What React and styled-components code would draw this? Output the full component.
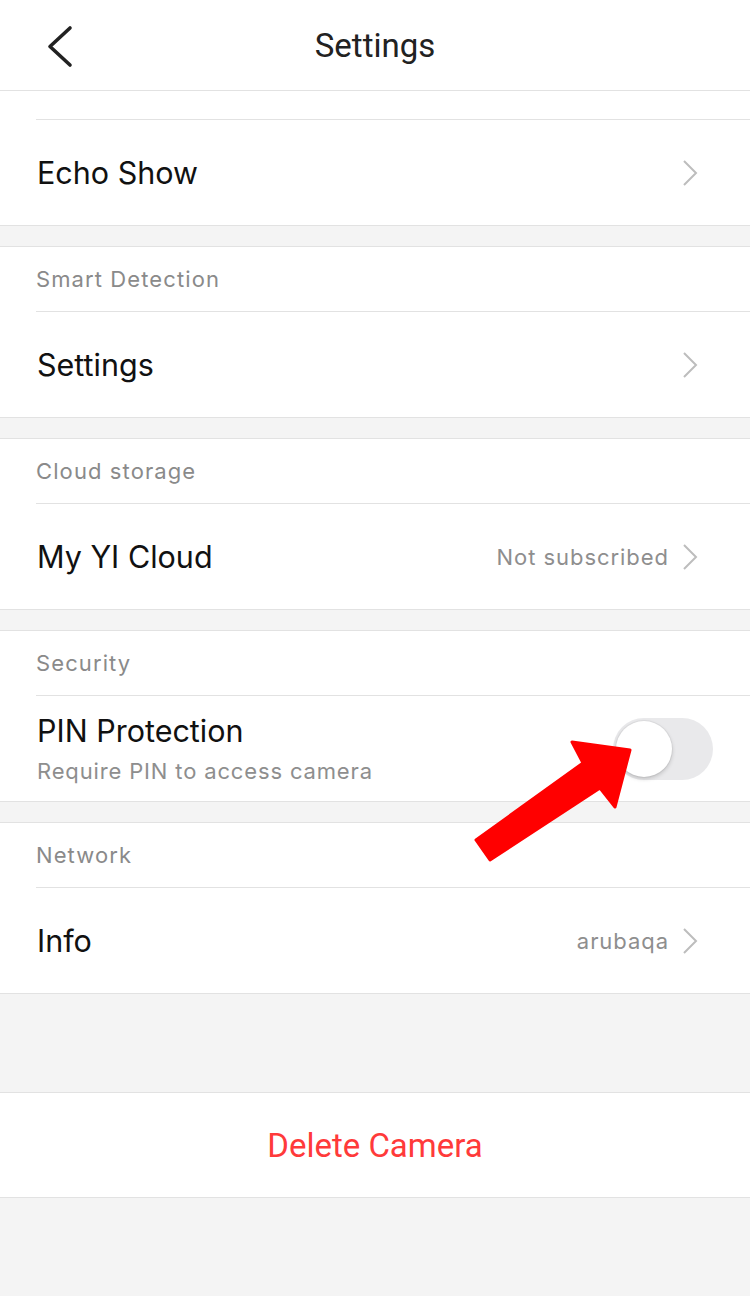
import React, { useState } from 'react';
import styled, { createGlobalStyle } from 'styled-components';

const GlobalStyle = createGlobalStyle`
  html, body {
    margin: 0;
    padding: 0;
    background: #f4f4f4;
  }
  body {
    font-family: Inter, "Noto Sans", sans-serif;
    -webkit-font-smoothing: antialiased;
  }
`;

const Page = styled.div`
  position: relative;
  width: 750px;
  min-height: 1296px;
  background: #f4f4f4;
`;

const Header = styled.header`
  height: 90px;
  background: #fff;
  border-bottom: 1px solid #e2e2e2;
  display: flex;
  align-items: center;
  justify-content: center;
  position: relative;
`;

const BackButton = styled.button`
  position: absolute;
  left: 46px;
  top: 25px;
  border: none;
  background: none;
  padding: 0;
  display: flex;
`;

const Title = styled.h1`
  margin: 0;
  font-family: Roboto, "Liberation Sans", sans-serif;
  font-weight: 400;
  font-size: 33px;
  color: #222;
  line-height: 1;
`;

const Section = styled.section`
  background: #fff;
  border-bottom: 1px solid #e2e2e2;
  border-top: ${(p) => (p.first ? 'none' : '1px solid #e2e2e2')};
  margin-top: ${(p) => (p.gap || 0)}px;
  padding-top: ${(p) => (p.top || 0)}px;
`;

const SectionLabel = styled.div`
  height: 64px;
  margin-left: 36px;
  border-bottom: 1px solid #e2e2e2;
  display: flex;
  align-items: center;
  font-size: 22px;
  letter-spacing: 1.1px;
  color: #8a8a8a;
`;

const Divider = styled.div`
  margin-left: 36px;
  border-bottom: 1px solid #e2e2e2;
`;

const Row = styled.div`
  height: 105px;
  display: flex;
  align-items: center;
  padding: 0 52px 0 37px;
`;

const RowText = styled.div`
  flex: 1;
  display: flex;
  flex-direction: column;
  gap: 11px;
`;

const RowTitle = styled.div`
  font-size: 30.5px;
  color: #111;
  line-height: 1.1;
`;

const RowSub = styled.div`
  font-size: 22px;
  letter-spacing: 0.85px;
  color: #8e8e8e;
  line-height: 1.1;
`;

const RowValue = styled.span`
  font-size: 22px;
  letter-spacing: 0.95px;
  color: #8e8e8e;
  margin-right: 13px;
`;

const Toggle = styled.div`
  width: 100px;
  height: 62px;
  border-radius: 31px;
  background: #e9e9eb;
  position: relative;
  margin-right: -15px;
`;

const Knob = styled.div`
  position: absolute;
  top: 3px;
  left: ${(p) => (p.on ? '41px' : '3px')};
  width: 56px;
  height: 56px;
  border-radius: 50%;
  background: #fff;
  box-shadow: 0 2px 4px rgba(0, 0, 0, 0.18), 0 0 0 1px rgba(0, 0, 0, 0.04);
`;

const Spacer = styled.div`
  height: 98px;
`;

const DeleteRow = styled.div`
  height: 104px;
  display: flex;
  align-items: center;
  justify-content: center;
  font-family: Roboto, "Liberation Sans", sans-serif;
  font-size: 33px;
  color: #ff3a3a;
  background: #fff;
  border-top: 1px solid #e2e2e2;
  border-bottom: 1px solid #e2e2e2;
`;

const Arrow = styled.svg`
  position: absolute;
  left: 470px;
  top: 735px;
  pointer-events: none;
`;

const Chevron = () => (
  <svg width="16" height="28" viewBox="0 0 16 28">
    <path d="M2 2 L14 14 L2 26" fill="none" stroke="#bdbdbd" strokeWidth="2" />
  </svg>
);

const BackIcon = () => (
  <svg width="28" height="44" viewBox="0 0 28 44">
    <path d="M24 3 L4 21.5 L24 40" fill="none" stroke="#222" strokeWidth="3.6" strokeLinecap="round" strokeLinejoin="round" />
  </svg>
);

const App = () => {
  const [pinOn, setPinOn] = useState(false);

  return (
    <Page>
      <GlobalStyle />
      <Header>
        <BackButton>
          <BackIcon />
        </BackButton>
        <Title>Settings</Title>
      </Header>

      <Section first top={28}>
        <Divider />
        <Row>
          <RowText><RowTitle>Echo Show</RowTitle></RowText>
          <Chevron />
        </Row>
      </Section>

      <Section gap={20}>
        <SectionLabel>Smart Detection</SectionLabel>
        <Row>
          <RowText><RowTitle>Settings</RowTitle></RowText>
          <Chevron />
        </Row>
      </Section>

      <Section gap={20}>
        <SectionLabel>Cloud storage</SectionLabel>
        <Row>
          <RowText><RowTitle>My YI Cloud</RowTitle></RowText>
          <RowValue>Not subscribed</RowValue>
          <Chevron />
        </Row>
      </Section>

      <Section gap={20}>
        <SectionLabel>Security</SectionLabel>
        <Row>
          <RowText>
            <RowTitle>PIN Protection</RowTitle>
            <RowSub>Require PIN to access camera</RowSub>
          </RowText>
          <Toggle onClick={() => setPinOn(!pinOn)}>
            <Knob on={pinOn} />
          </Toggle>
        </Row>
      </Section>

      <Section gap={20}>
        <SectionLabel>Network</SectionLabel>
        <Row>
          <RowText><RowTitle>Info</RowTitle></RowText>
          <RowValue>arubaqa</RowValue>
          <Chevron />
        </Row>
      </Section>

      <Spacer />
      <DeleteRow>Delete Camera</DeleteRow>

      <Arrow width="170" height="140" viewBox="0 0 170 140">
        {/* points relative to (470, 735) */}
        <polygon
          points="102,7 160,15 145,72 130,53 20,125 6,105 113,28"
          fill="#ff0000"
          strokeLinejoin="round"
          stroke="#ff0000"
          strokeWidth="3"
        />
      </Arrow>
    </Page>
  );
};

export default App;
